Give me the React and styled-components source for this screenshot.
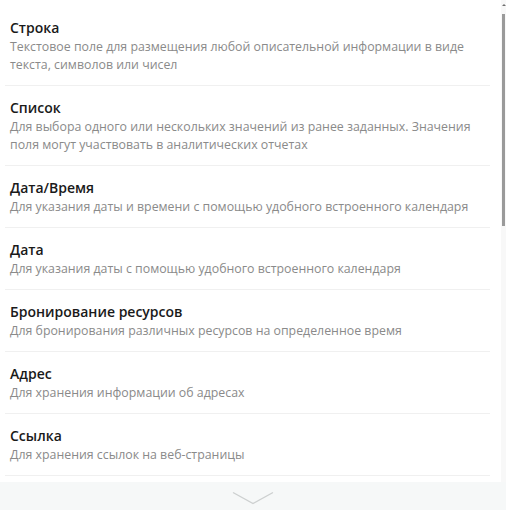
import React from 'react'
import styled, { createGlobalStyle } from 'styled-components'

const GlobalStyle = createGlobalStyle`
    html, body {
        margin: 0;
        padding: 0;
        background: #ffffff;
    }
    body {
        font-family: "Open Sans", "Noto Sans", "Liberation Sans", sans-serif;
    }
`

const fieldTypes = [
    { title: 'Строка', text: 'Текстовое поле для размещения любой описательной информации в виде текста, символов или чисел' },
    { title: 'Список', text: 'Для выбора одного или нескольких значений из ранее заданных. Значения поля могут участвовать в аналитических отчетах' },
    { title: 'Дата/Время', text: 'Для указания даты и времени с помощью удобного встроенного календаря' },
    { title: 'Дата', text: 'Для указания даты с помощью удобного встроенного календаря' },
    { title: 'Бронирование ресурсов', text: 'Для бронирования различных ресурсов на определенное время' },
    { title: 'Адрес', text: 'Для хранения информации об адресах' },
    { title: 'Ссылка', text: 'Для хранения ссылок на веб-страницы' },
]

const App = () => {
    return (
        <>
            <GlobalStyle />
            <Panel>
                <Body>
                    <List>
                        {fieldTypes.map((item, index) => (
                            <Item key={index}>
                                <Title>{item.title}</Title>
                                <Description>{item.text}</Description>
                            </Item>
                        ))}
                    </List>
                    <Rail>
                        <RailArrow />
                        <Thumb />
                    </Rail>
                </Body>
                <MoreBar>
                    <svg width="42" height="14" viewBox="0 0 42 14">
                        <path d="M1 1.5 L21 12.5 L41 1.5" fill="none" stroke="#cdd0d0" strokeWidth="1.4" />
                    </svg>
                </MoreBar>
            </Panel>
        </>
    )
}

const Panel = styled.div`
    width: 506px;
    height: 510px;
    display: flex;
    flex-direction: column;
    background: #ffffff;
`

const Body = styled.div`
    flex: 1;
    min-height: 0;
    display: flex;
`

const List = styled.div`
    flex: 1;
    overflow: hidden;
    padding: 6px 11px 0 5px;
`

const Item = styled.div`
    padding: 12px 5px 11px 5px;
    border-bottom: 1px solid #f0f0f0;
    cursor: pointer;
`

const Title = styled.div`
    font-size: 14px;
    line-height: 20px;
    font-weight: 600;
    color: #1a1a1a;
`

const Description = styled.div`
    font-size: 12.35px;
    line-height: 18px;
    color: #8a8a8a;
`

const Rail = styled.div`
    width: 5px;
    flex-shrink: 0;
    background: #f8f8f8;
    display: flex;
    flex-direction: column;
    align-items: flex-start;
`

const RailArrow = styled.div`
    width: 0;
    height: 0;
    margin: 4px 0 0 1px;
    border-left: 2px solid transparent;
    border-right: 2px solid transparent;
    border-bottom: 2px solid #6f6f6f;
`

const Thumb = styled.div`
    width: 3px;
    height: 212px;
    margin: 8px 0 0 1px;
    background: #9a9a9a;
`

const MoreBar = styled.div`
    height: 28px;
    box-sizing: border-box;
    padding-top: 3px;
    flex-shrink: 0;
    background: #f6f8f8;
    display: flex;
    align-items: center;
    justify-content: center;
    cursor: pointer;
`

export default App
